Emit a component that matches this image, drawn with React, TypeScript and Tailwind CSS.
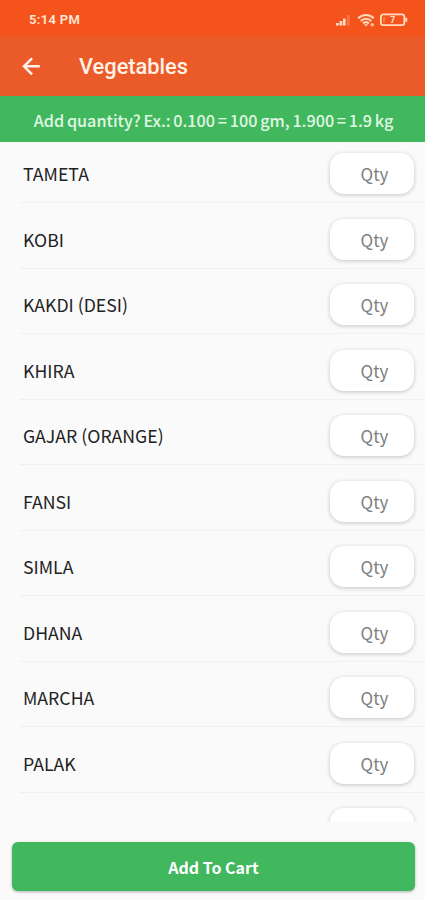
import React from "react";

const VEGETABLES = [
  "TAMETA",
  "KOBI",
  "KAKDI (DESI)",
  "KHIRA",
  "GAJAR (ORANGE)",
  "FANSI",
  "SIMLA",
  "DHANA",
  "MARCHA",
  "PALAK",
  "",
];

const StatusBar: React.FC = () => (
  <div className="flex h-[36px] shrink-0 items-center justify-between bg-[#f4541c] pt-[3px] pr-[17px] pl-[29px] font-['Roboto',sans-serif] text-[13px] font-semibold text-[#ffe6d6]">
    <span className="tracking-[0.35px]">5:14 PM</span>
    <svg width="74" height="16" viewBox="0 0 74 16" fill="none">
      {/* signal */}
      <g fill="#ffd9c0">
        <rect x="2" y="11" width="2.8" height="2.5" />
        <rect x="5.5" y="9" width="2.8" height="4.5" />
        <rect x="9" y="6.5" width="2.6" height="7" />
        <rect x="12.8" y="3" width="3" height="10.5" opacity="0.25" />
      </g>
      {/* wifi */}
      <g stroke="#ffd9c0" strokeWidth="2.1">
        <path d="M24.2 6.3C28.5 1.9 35.5 1.9 39.8 6.3" />
        <path d="M26.7 9C29.7 6 34.3 6 37.3 9" />
        <path d="M29 11.4C30.7 9.9 33.3 9.9 35 11.4" />
      </g>
      <path d="M30 12.3H34L32 14.5Z" fill="#ffd9c0" />
      <circle cx="38.2" cy="12.8" r="1.7" fill="#ffd9c0" opacity="0.8" />
      {/* battery */}
      <rect x="46.9" y="2.4" width="23.4" height="10.7" rx="2.4" stroke="#ffd9c0" strokeWidth="1.8" />
      <path d="M72.2 5.7V9.8" stroke="#ffd9c0" strokeWidth="2" />
      <path d="M50 5V10.5" stroke="#ffd9c0" opacity="0.5" />
      <text x="58.7" y="10.8" textAnchor="middle" fontSize="8.5" fontWeight="700" fill="#ffe6d6">
        7
      </text>
    </svg>
  </div>
);

const AppBar: React.FC = () => (
  <header className="flex h-[60px] shrink-0 items-center bg-[#eb5b2a] pl-[22px] text-[#fff1e6]">
    <svg width="19" height="19" viewBox="0 0 19 19" fill="none" stroke="currentColor" strokeWidth="2.5">
      <path d="M17.8 9.3H2.5M10 1.3L2 9.3L10 17.3" />
    </svg>
    <h1 className="ml-[38px] pt-[3px] font-['Roboto',sans-serif] text-[21.8px] font-medium">Vegetables</h1>
  </header>
);

const VegetableRow: React.FC<{ name: string }> = ({ name }) => (
  <div className="ml-[20px] flex h-[65.5px] items-center justify-between border-b border-[#f0f0f0] pt-[8px] pr-[11px] pl-[3px]">
    <span className="text-[17.7px] text-[#222]">{name}</span>
    <div className="flex h-[41px] w-[84px] items-center justify-center rounded-[14px] bg-white pl-[5px] text-[17px] text-[#808080] shadow-[0_1px_4px_rgba(0,0,0,0.22)]">
      {name && "Qty"}
    </div>
  </div>
);

const App: React.FC = () => {
  return (
    <div className="flex h-[900px] w-[425px] flex-col overflow-hidden bg-[#fafafa] font-['Noto_Sans_CJK_JP',sans-serif]">
      <StatusBar />
      <AppBar />
      <div className="flex h-[46px] shrink-0 items-center justify-center bg-[#41b75e] pt-[2px] pl-[2px] text-[16.2px] font-medium [word-spacing:-0.9px] whitespace-nowrap text-[#e0f7e4]">
        Add quantity? Ex.: 0.100 = 100 gm, 1.900 = 1.9 kg
      </div>

      <main className="h-[680px] shrink-0 overflow-hidden">
        <div className="-mt-[4.5px]">
          {VEGETABLES.map((name) => (
            <VegetableRow key={name} name={name} />
          ))}
        </div>
      </main>

      <div className="pt-[20px] pr-[10px] pl-[12px]">
        <button className="h-[49px] w-full rounded-[6px] bg-[#41b75e] pt-px text-[16px] font-bold text-white shadow-[0_1px_3px_rgba(0,0,0,0.3)]">
          Add To Cart
        </button>
      </div>
    </div>
  );
};

export default App;
